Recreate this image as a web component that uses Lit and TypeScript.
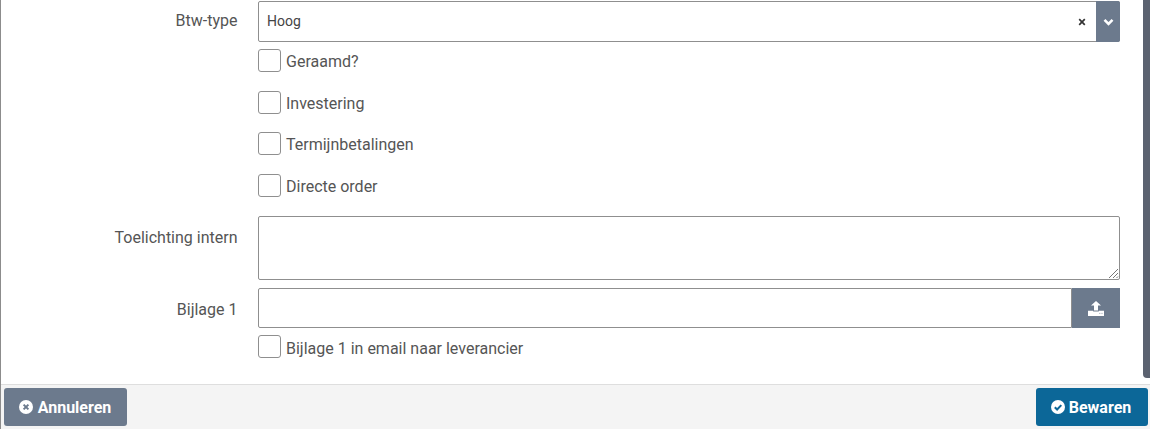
import { LitElement, html, css } from 'lit';
import { customElement } from 'lit/decorators.js';

@customElement('app-root')
export class AppRoot extends LitElement {
  static styles = css`
    :host {
      display: block;
      width: 1150px;
      height: 429px;
      position: relative;
      overflow: hidden;
      background: #fff;
      font-family: Roboto, "Liberation Sans", sans-serif;
      font-size: 16px;
      color: #555;
    }
    * { box-sizing: border-box; }
    .page {
      height: 429px;
      display: flex;
      flex-direction: column;
      border-left: 1px solid #8c8c8c;
    }
    .form {
      height: 384px;
      padding: 1px 30px 0 0;
      display: grid;
      grid-template-columns: 236.5px 1fr;
      column-gap: 20.5px;
      align-content: start;
    }
    .label { text-align: right; line-height: 40px; height: 40px; }
    .label.low { line-height: 44px; }
    .control { min-width: 0; }
    .select {
      height: 41px;
      display: flex;
      align-items: stretch;
      border: 1px solid #8f8f8f;
      border-radius: 2px;
      font-size: 14px;
      color: #444;
    }
    .select .value { flex: 1; padding-left: 8px; line-height: 39px; }
    .select .clear { width: 19px; display: flex; align-items: center; }
    .select .arrow {
      width: 24px;
      margin: -1px;
      background: #6c7a8d;
      border-radius: 0 2px 2px 0;
      display: flex;
      align-items: center;
      justify-content: center;
    }
    .checks { display: flex; flex-direction: column; gap: 18.5px; padding-top: 7px; height: 174px; }
    .check { display: flex; align-items: center; gap: 5px; height: 23px; white-space: nowrap; }
    .check .text { padding-top: 2px; }
    .last .text { padding-top: 4px; }
    .box { width: 23px; height: 23px; border: 1px solid #8f8f8f; border-radius: 3px; background: #fff; }
    .textarea {
      display: block;
      position: relative;
      height: 64px;
      border: 1px solid #8f8f8f;
      border-radius: 2px;
      margin-bottom: 8px;
    }
    .grip { position: absolute; right: 0; bottom: 0; }
    .upload { display: flex; height: 40px; }
    .upload .input { flex: 1; border: 1px solid #8f8f8f; border-radius: 2px 0 0 2px; }
    .upload .btn {
      width: 48px;
      background: #6c7a8d;
      display: flex;
      align-items: center;
      justify-content: center;
    }
    .last { margin-top: 7px; }
    .footer {
      height: 45px;
      border-top: 1px solid #dedede;
      background: #f4f4f4;
      padding: 3px 2px 3px 3px;
      display: flex;
      justify-content: space-between;
      align-items: flex-start;
    }
    .button {
      height: 38px;
      border-radius: 3px;
      color: #fff;
      font-weight: 700;
      font-size: 16px;
      display: flex;
      align-items: center;
      justify-content: center;
      gap: 4px;
    }
    .cancel { width: 123px; background: #6c7a8d; gap: 5px; padding-right: 1px; }
    .save { width: 112px; background: #0c6798; padding-right: 2px; }
    .scrollbar {
      position: absolute;
      top: 0;
      right: 0;
      width: 7px;
      height: 378px;
      background: #5b6270;
      border-radius: 0 0 0 4px;
    }
  `;

  renderCheck(text: string) {
    return html`<div class="check"><span class="box"></span><span class="text">${text}</span></div>`;
  }

  render() {
    return html`
      <div class="page">
        <div class="form">
          <div class="label">Btw-type</div>
          <div class="control">
            <div class="select">
              <div class="value">Hoog</div>
              <div class="clear">
                <svg width="8" height="8" viewBox="0 0 8 8"><path d="M1.2 1.2l5.6 5.6M6.8 1.2L1.2 6.8" stroke="#333" stroke-width="1.7" fill="none"/></svg>
              </div>
              <div class="arrow">
                <svg width="11" height="8" viewBox="0 0 11 8"><path d="M1.5 1.8l4 4 4-4" stroke="#fff" stroke-width="2.6" fill="none"/></svg>
              </div>
            </div>
          </div>
          <div></div>
          <div class="checks">
            ${this.renderCheck('Geraamd?')}
            ${this.renderCheck('Investering')}
            ${this.renderCheck('Termijnbetalingen')}
            ${this.renderCheck('Directe order')}
          </div>
          <div class="label low">Toelichting intern</div>
          <div class="textarea">
            <svg class="grip" width="11" height="11" viewBox="0 0 11 11"><path d="M1 10L10 1M5 10l5-5M8.5 10l1.5-1.5" stroke="#777" stroke-width="1" fill="none"/></svg>
          </div>
          <div class="label low">Bijlage 1</div>
          <div class="upload">
            <div class="input"></div>
            <div class="btn">
              <svg width="16" height="15" viewBox="0 0 16 15"><path d="M8 0l5 4.6h-3V9.5H6V4.6H3zM0 9.8h5.2v.7h5.6v-.7H16V15H0z" fill="#fff"/><path d="M11.2 12.4h1.2M13.4 12.4h1.2" stroke="#aab2bd" stroke-width="1"/></svg>
            </div>
          </div>
          <div></div>
          <div class="last">${this.renderCheck('Bijlage 1 in email naar leverancier')}</div>
        </div>
        <div class="footer">
          <div class="button cancel">
            <svg width="14" height="14" viewBox="0 0 14 14"><circle cx="7" cy="7" r="7" fill="#fff"/><path d="M4.6 4.6l4.8 4.8M9.4 4.6L4.6 9.4" stroke="#6c7a8d" stroke-width="2"/></svg>
            <span>Annuleren</span>
          </div>
          <div class="button save">
            <svg width="14" height="14" viewBox="0 0 14 14"><circle cx="7" cy="7" r="7" fill="#fff"/><path d="M3.8 7.2l2.3 2.3 4.2-4.4" stroke="#0c6798" stroke-width="2" fill="none"/></svg>
            <span>Bewaren</span>
          </div>
        </div>
      </div>
      <div class="scrollbar"></div>
    `;
  }
}
